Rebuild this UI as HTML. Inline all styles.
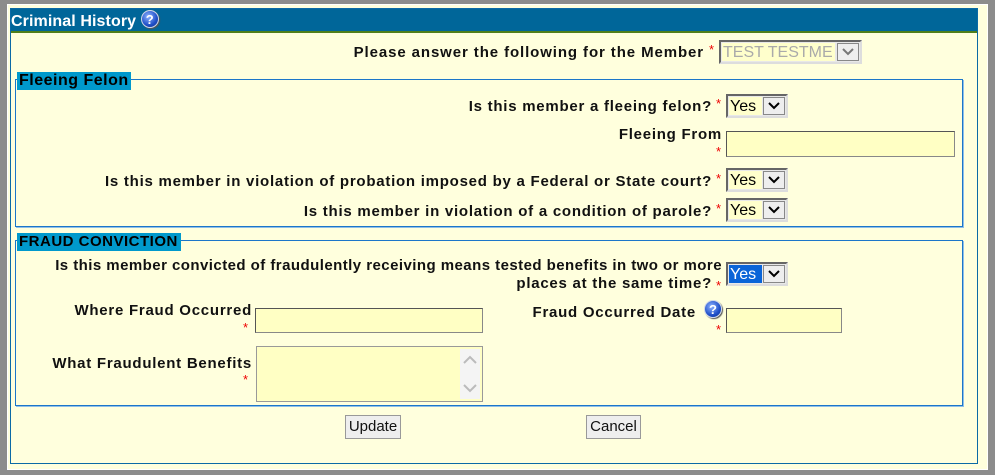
<!DOCTYPE html>
<html><head><style>
*{margin:0;padding:0;box-sizing:border-box}
body{width:995px;height:475px;background:#8c8c8c;position:relative;overflow:hidden;font-family:"Liberation Sans",Arial,sans-serif}
.a{position:absolute}
.win{left:7px;top:4px;width:981px;height:466px;background:#ffffdd;border:1px solid #fff}
.inner{left:10px;top:8px;width:968px;height:456px;border:1px solid #0b6aa6;background:#ffffdd}
.title{left:11px;top:9px;width:966px;height:24px;background:#006699;border-bottom:2px solid #4f7f1a;color:#fff;font-weight:bold;font-size:16px;line-height:25px;padding-left:0px;letter-spacing:0.1px}
.q{display:inline-block;width:18px;height:18px;border-radius:50%;background:radial-gradient(circle at 40% 35%,#8fb4ff,#1f4fc8 60%,#0e2e8a);color:#fff;font-size:13px;font-weight:bold;text-align:center;line-height:18px;border:1px solid #d0d8e8;box-shadow:1px 1px 1px #555;letter-spacing:0}
.fs{border:1px solid #1c76c9;box-shadow:1px 1px 0 #8fbfe8}
.lg{background:#0099cc;color:#000;font-weight:bold;font-size:15px;line-height:18px;padding-left:2px;letter-spacing:0.5px}
.l{font-weight:bold;font-size:15px;color:#111;text-align:right;letter-spacing:0.75px;white-space:nowrap;left:0}
.s{color:#e00;font-size:13px}
.sel{height:24px;background:#e8e8e8;border:2px solid;border-color:#666 #ddd #ddd #666;font-size:16px}
.sel .v{position:absolute;left:1px;top:1px;height:18px;background:#ffffcc;line-height:19px;padding-left:1px}
.sel .b{position:absolute;right:1px;top:1px;width:22px;height:18px;background:#eee;border:1px solid #888;text-align:center}
.inp{background:#ffffc4;border:1px solid #888;border-top-color:#555;border-left-color:#555}
.btn{background:#eee;border:1px solid #999;font-size:15px;text-align:center;line-height:22px;color:#111}
</style></head><body>
<div class="a win"></div>
<div class="a inner"></div>
<div class="a title">Criminal History <span class="q" style="position:relative;top:-2px">?</span></div>

<div class="a l" style="top:44px;width:704px;letter-spacing:0.9px">Please answer the following for the Member</div>
<div class="a s" style="left:709px;top:42px">*</div>
<div class="a sel" style="left:719px;top:40px;width:143px"><div class="v" style="width:113px;color:#aaa">TEST TESTME</div><div class="b"><svg width="14" height="10" viewBox="0 0 14 10"><path d="M2 2 L7 7 L12 2" stroke="#777" stroke-width="2" fill="none"/></svg></div></div>

<div class="a fs" style="left:15px;top:79px;width:948px;height:148px"></div>
<div class="a lg" style="left:17px;top:72px;width:114px;font-size:16px">Fleeing Felon</div>

<div class="a l" style="top:98px;width:712px">Is this member a fleeing felon?</div>
<div class="a s" style="left:716px;top:96px">*</div>
<div class="a sel" style="left:726px;top:94px;width:62px"><div class="v" style="width:33px">Yes</div><div class="b"><svg width="14" height="10" viewBox="0 0 14 10"><path d="M2 2 L7 7 L12 2" stroke="#000" stroke-width="2" fill="none"/></svg></div></div>

<div class="a l" style="top:126px;width:722px">Fleeing From</div>
<div class="a s" style="left:716px;top:144px">*</div>
<div class="a inp" style="left:726px;top:131px;width:229px;height:26px"></div>

<div class="a l" style="top:173px;width:712px">Is this member in violation of probation imposed by a Federal or State court?</div>
<div class="a s" style="left:716px;top:171px">*</div>
<div class="a sel" style="left:726px;top:168px;width:62px"><div class="v" style="width:33px">Yes</div><div class="b"><svg width="14" height="10" viewBox="0 0 14 10"><path d="M2 2 L7 7 L12 2" stroke="#000" stroke-width="2" fill="none"/></svg></div></div>

<div class="a l" style="top:203px;width:712px">Is this member in violation of a condition of parole?</div>
<div class="a s" style="left:716px;top:201px">*</div>
<div class="a sel" style="left:726px;top:198px;width:62px"><div class="v" style="width:33px">Yes</div><div class="b"><svg width="14" height="10" viewBox="0 0 14 10"><path d="M2 2 L7 7 L12 2" stroke="#000" stroke-width="2" fill="none"/></svg></div></div>

<div class="a fs" style="left:15px;top:240px;width:948px;height:166px"></div>
<div class="a lg" style="left:17px;top:233px;width:164px">FRAUD CONVICTION</div>

<div class="a l" style="top:257px;width:722px;letter-spacing:0.45px">Is this member convicted of fraudulently receiving means tested benefits in two or more</div>
<div class="a l" style="top:275px;width:712px">places at the same time?</div>
<div class="a s" style="left:716px;top:278px">*</div>
<div class="a sel" style="left:726px;top:262px;width:62px"><div class="v" style="width:33px;background:#0a64d8;color:#fff">Yes</div><div class="b"><svg width="14" height="10" viewBox="0 0 14 10"><path d="M2 2 L7 7 L12 2" stroke="#000" stroke-width="2" fill="none"/></svg></div></div>

<div class="a l" style="top:302px;width:252px">Where Fraud Occurred</div>
<div class="a s" style="left:243px;top:320px">*</div>
<div class="a inp" style="left:255px;top:308px;width:228px;height:25px"></div>

<div class="a l" style="top:304px;width:696px">Fraud Occurred Date</div>
<div class="a q" style="left:704px;top:300px">?</div>
<div class="a s" style="left:716px;top:322px">*</div>
<div class="a inp" style="left:726px;top:308px;width:116px;height:25px"></div>

<div class="a l" style="top:355px;width:252px">What Fraudulent Benefits</div>
<div class="a s" style="left:243px;top:372px">*</div>
<div class="a inp" style="left:256px;top:346px;width:227px;height:56px;border-color:#999;background:#ffffc4"><div class="a" style="right:2px;top:2px;width:20px;height:50px;background:#f4f4f4"><svg width="20" height="50" viewBox="0 0 20 50"><path d="M4 14 L10 8 L16 14" stroke="#bbb" stroke-width="2" fill="none"/><path d="M4 36 L10 42 L16 36" stroke="#bbb" stroke-width="2" fill="none"/></svg></div></div>

<div class="a btn" style="left:345px;top:415px;width:56px;height:24px">Update</div>
<div class="a btn" style="left:586px;top:415px;width:55px;height:24px">Cancel</div>
</body></html>
